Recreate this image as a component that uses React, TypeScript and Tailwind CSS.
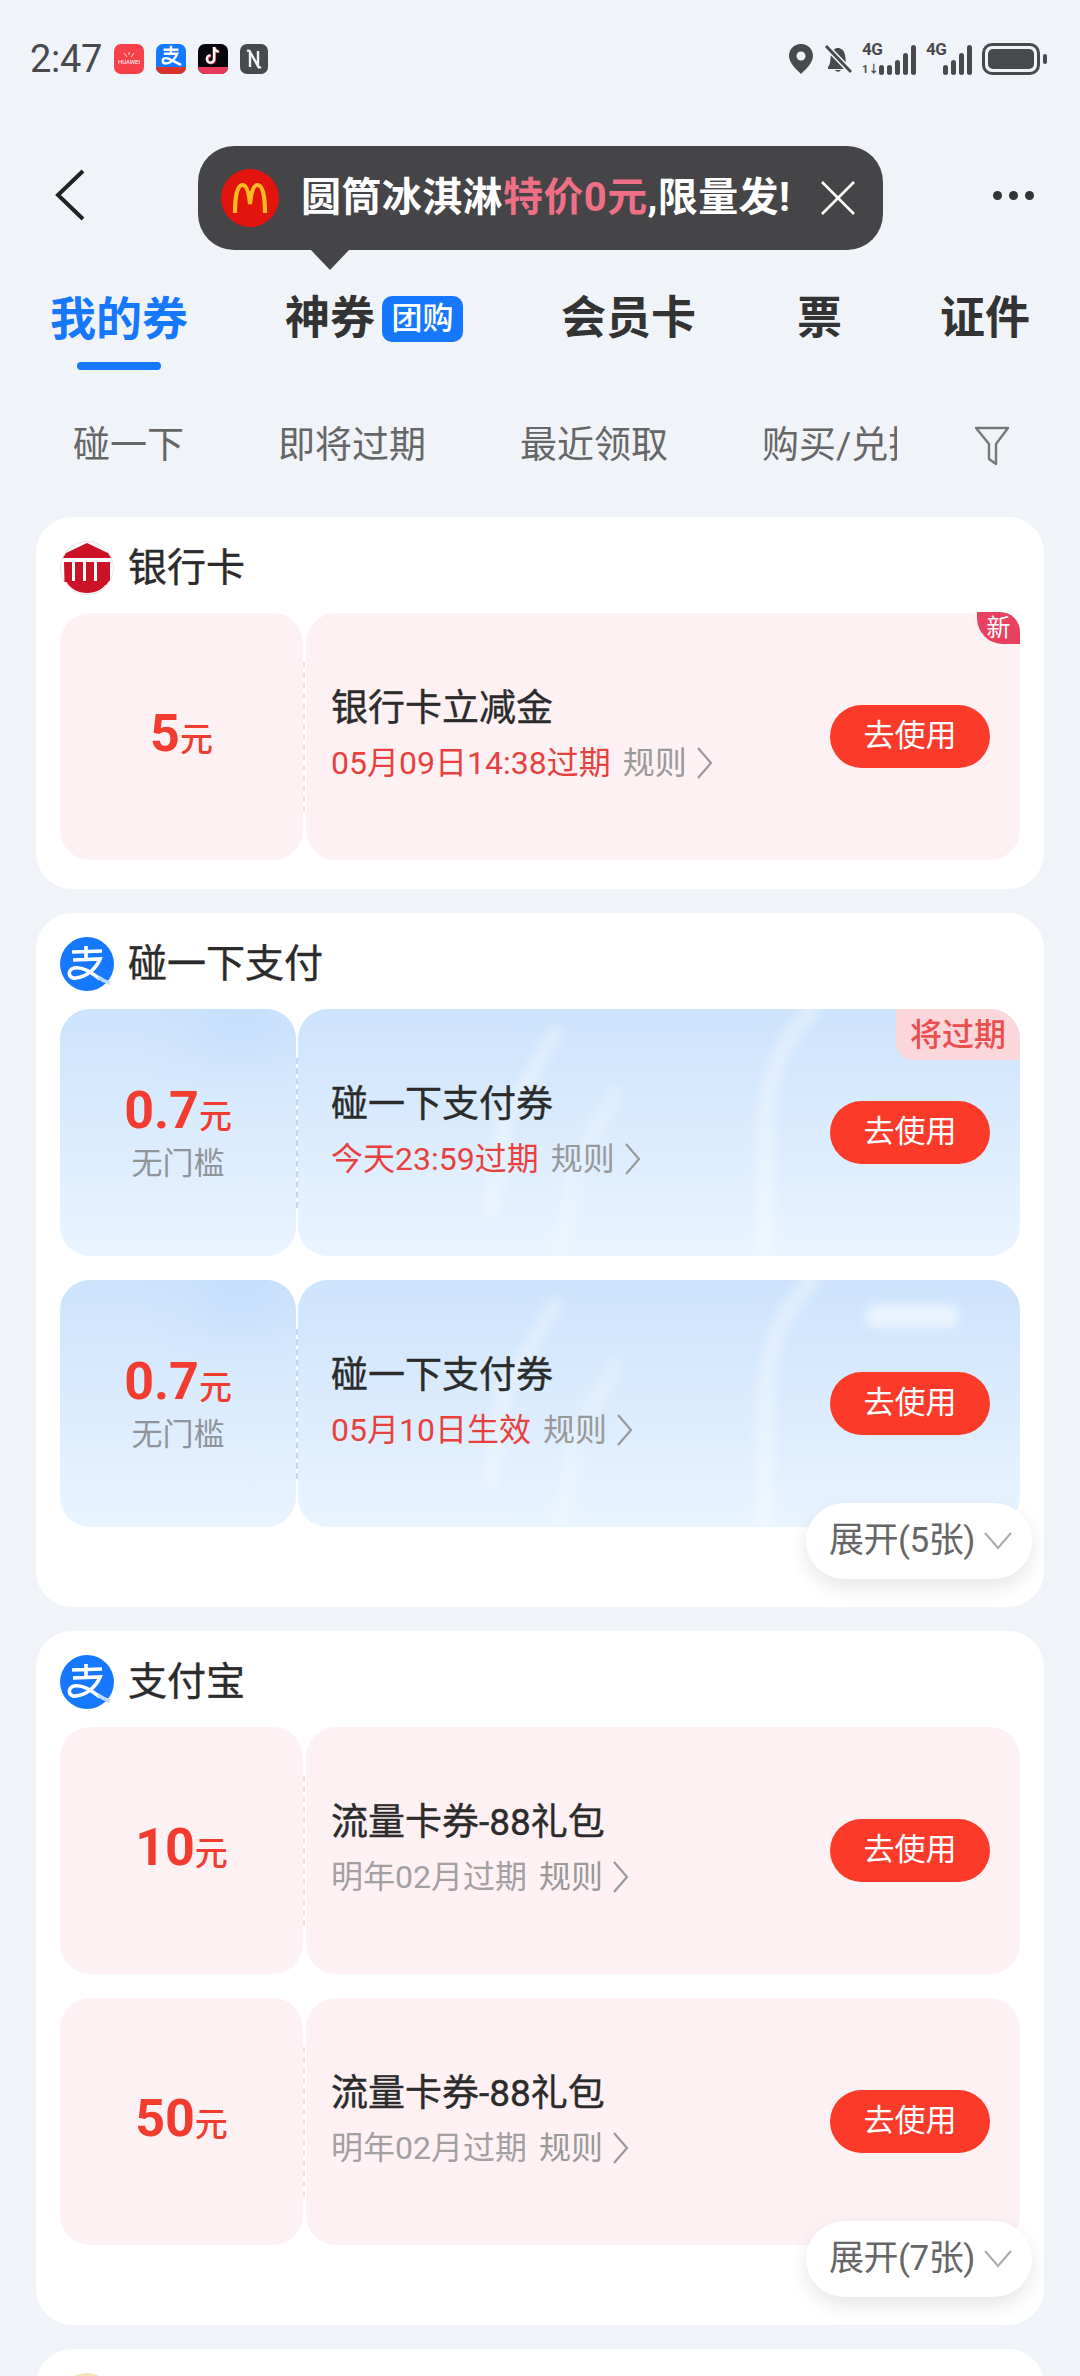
const font = "[font-family:Roboto,'Noto_Sans_CJK_SC',sans-serif]"

function Bars({ lit }: { lit: number[] }) {
  return (
    <div className="flex items-end gap-[3px]">
      {lit.map((h, i) => (
        <div key={i} className={h > 20 ? "h-[30px] w-[5px] rounded-full bg-[#48494d]" : h > 15 ? "h-[22px] w-[5px] rounded-full bg-[#48494d]" : h > 12 ? "h-[15px] w-[5px] rounded-full bg-[#48494d]" : "h-[10px] w-[5px] rounded-full bg-[#48494d]"} />
      ))}
    </div>
  )
}

function StatusBar() {
  return (
    <div className="flex h-[118px] items-center pl-[30px] pr-[33px] text-[#48494d]">
      <span className="w-[72px] text-[38px] leading-none tracking-[-0.3px]">2:47</span>
      <div className="ml-[12px] flex items-center gap-[12px]">
        <div className="flex h-[30px] w-[30px] flex-col items-center justify-center rounded-[7px] bg-[#f7404a]">
          <svg width="14" height="6" viewBox="0 0 14 6" fill="none" stroke="#ffd6d6" strokeWidth="1">
            <path d="M2 1l3 4M12 1L9 5M7 0v3" />
          </svg>
          <span className="text-[6px] leading-[8px] text-white">HUAWEI</span>
        </div>
        <div className="flex h-[30px] w-[30px] flex-col overflow-hidden rounded-[7px] bg-[#1677ff]">
          <svg className="mx-auto" width="24" height="23" viewBox="0 0 54 52" fill="none" stroke="#fff" strokeWidth="5.5">
            <path d="M10 13h34M27 4v16M11 22h30C36 34 26 44 15 44 6 44 6 32 15 32 25 32 36 42 50 47" />
          </svg>
          <span className="h-[7px] bg-[#d8322a]" />
        </div>
        <div className="flex h-[30px] w-[30px] flex-col overflow-hidden rounded-[7px] bg-[#07060d]">
          <svg className="mx-auto" width="18" height="23" viewBox="0 0 18 23" fill="none">
            <path d="M10 3v12a3.6 3.6 0 1 1-3.6-3.6M10 3c.4 2.6 2.2 4.2 4.6 4.5" stroke="#ff3b5c" strokeWidth="2.6" transform="translate(.8 .5)" />
            <path d="M10 3v12a3.6 3.6 0 1 1-3.6-3.6M10 3c.4 2.6 2.2 4.2 4.6 4.5" stroke="#fff" strokeWidth="2.4" />
          </svg>
          <span className="h-[7px] bg-[#e8395a]" />
        </div>
        <svg width="28" height="30" viewBox="0 0 28 30">
          <rect width="28" height="30" rx="7" fill="#48494d" />
          <path d="M7 7c2-1 3 0 3 2v14M21 23c-2 1-3 0-3-2V7M9 6l10 18" fill="none" stroke="#f0f3f8" strokeWidth="2.4" />
        </svg>
      </div>

      <div className="ml-auto flex items-center">
        <svg width="24" height="30" viewBox="0 0 24 30">
          <path d="M12 0C5 0 0 5 0 12c0 7 8 14 12 18 4-4 12-11 12-18C24 5 19 0 12 0z" fill="#48494d" />
          <circle cx="12" cy="12" r="4.5" fill="#f0f3f8" />
        </svg>
        <svg className="ml-[11px]" width="28" height="30" viewBox="0 0 28 30">
          <path d="M4 23c3-3 2-8 3-12 1-5 4-7 7-7s6 2 7 7c1 4 0 9 3 12v2H4z" fill="#48494d" />
          <path d="M11 26a3.5 3.5 0 0 0 6 0z" fill="#48494d" />
          <path d="M2 2l25 26" stroke="#f0f3f8" strokeWidth="6" />
          <path d="M2 2l25 26" stroke="#48494d" strokeWidth="3" />
        </svg>
        <div className="relative ml-[10px] h-[32px] w-[54px]">
          <span className="absolute left-0 top-[-3px] text-[17px] font-bold leading-[18px] tracking-[-0.5px]">4G</span>
          <span className="absolute bottom-0 left-0 text-[11px] font-bold leading-[10px]">1↓</span>
          <div className="absolute bottom-0 right-0">
            <Bars lit={[8, 10, 14, 18, 30]} />
          </div>
        </div>
        <div className="relative ml-[10px] h-[32px] w-[46px]">
          <span className="absolute left-0 top-[-3px] text-[17px] font-bold leading-[18px] tracking-[-0.5px]">4G</span>
          <div className="absolute bottom-0 right-0">
            <Bars lit={[10, 14, 18, 30]} />
          </div>
        </div>
        <div className="ml-[10px] flex h-[32px] w-[58px] items-center rounded-[10px] border-[3px] border-[#48494d] p-[3px]">
          <div className="h-full w-full rounded-[5px] bg-[#48494d]" />
        </div>
        <div className="ml-[3px] h-[10px] w-[4px] rounded-full bg-[#48494d]" />
      </div>
    </div>
  )
}

function NavBar() {
  return (
    <div className="relative flex h-[154px] items-center justify-between pl-[54px] pr-[46px]">
      <svg width="32" height="52" viewBox="0 0 32 52" fill="none" stroke="#222" strokeWidth="4">
        <path d="M29 2L4 26l25 24" />
      </svg>
      <div className="flex gap-[7px]">
        <span className="h-[9px] w-[9px] rounded-full bg-[#333]" />
        <span className="h-[9px] w-[9px] rounded-full bg-[#333]" />
        <span className="h-[9px] w-[9px] rounded-full bg-[#333]" />
      </div>

      {/* promo tooltip */}
      <div className="absolute left-[198px] top-[28px] flex h-[104px] w-[685px] items-center rounded-[36px] bg-[#454547] pl-[23px]">
        <div className="flex h-[58px] w-[58px] items-center justify-center rounded-full bg-[#e3140e]">
          <svg width="36" height="32" viewBox="0 0 36 32" fill="none" stroke="#fdbb1e" strokeWidth="4.2">
            <path d="M3 31C3 15 5 3 10.5 3 15 3 17 12 18 22 19 12 21 3 25.5 3 31 3 33 15 33 31" />
          </svg>
        </div>
        <div className="ml-[22px] whitespace-nowrap text-[40px] font-bold leading-none tracking-[0.4px] text-white">
          圆筒冰淇淋<span className="text-[#ef6f86]">特价0元</span>,限量发!
        </div>
        <svg className="ml-[30px]" width="36" height="36" viewBox="0 0 36 36" stroke="#fff" strokeWidth="2.6">
          <path d="M2 2l32 32M34 2L2 34" />
        </svg>
        <div className="absolute left-[112px] top-[103px] h-0 w-0 border-x-[20px] border-t-[21px] border-x-transparent border-t-[#454547]" />
      </div>
    </div>
  )
}

function Tabs() {
  return (
    <div className="flex h-[98px] pl-[50px] pt-[20px] text-[45px] font-bold leading-[54px] text-[#333]">
      <div className="flex flex-col items-center text-[#1677ff]">
        <span className="text-[46px]">我的券</span>
        <span className="mt-[16px] h-[8px] w-[84px] rounded-full bg-[#1677ff]" />
      </div>
      <div className="ml-[97px] flex h-[54px] items-center">
        <span>神券</span>
        <span className="ml-[7px] flex h-[46px] w-[81px] items-center justify-center rounded-[10px] bg-[#1677ff] text-[31px] font-medium text-white">团购</span>
      </div>
      <span className="ml-[98px]">会员卡</span>
      <span className="ml-[101px]">票</span>
      <span className="ml-[98px]">证件</span>
    </div>
  )
}

function Filters() {
  return (
    <div className="flex h-[147px] items-center pl-[73px] pr-[70px] pt-[4px] text-[37px] text-[#666]">
      <div className="flex w-[824px] gap-[94px] overflow-hidden whitespace-nowrap">
        <span>碰一下</span>
        <span>即将过期</span>
        <span>最近领取</span>
        <span>购买/兑换</span>
      </div>
      <svg className="ml-auto" width="36" height="40" viewBox="0 0 36 40" fill="none" stroke="#777" strokeWidth="2.4">
        <path d="M2 2h32L22 18v20l-7-5V18z" strokeLinejoin="round" />
      </svg>
    </div>
  )
}

function Streaks({ spot }: { spot?: boolean }) {
  return (
    <svg className="absolute inset-0 h-full w-full rounded-[30px]" viewBox="0 0 723 247" preserveAspectRatio="none" fill="none" stroke="#fff">
      <defs>
        <filter id="soft" x="-30%" y="-30%" width="160%" height="160%">
          <feGaussianBlur stdDeviation="5" />
        </filter>
      </defs>
      <g filter="url(#soft)">
        <path d="M257 26L207 110 194 200" strokeWidth="16" strokeOpacity="0.3" strokeLinecap="round" />
        <path d="M317 85L277 160 264 240" strokeWidth="18" strokeOpacity="0.2" strokeLinecap="round" />
        <path d="M520 -6C486 30 470 60 468 120V247" strokeWidth="18" strokeOpacity="0.32" />
        {spot && <rect x="568" y="24" width="94" height="24" rx="12" fill="#fff" fillOpacity="0.55" stroke="none" />}
      </g>
    </svg>
  )
}

type CouponProps = {
  amount: string
  sub?: string
  title: string
  date: string
  dateRed?: boolean
  blue?: boolean
  badge?: "new" | "expiring"
}

function Coupon({ amount, sub, title, date, dateRed, blue, badge }: CouponProps) {
  const surface = blue ? "bg-gradient-to-b from-[#cde3fc] to-[#e9f4ff]" : "bg-[#fef1f4]"
  return (
    <div className="flex h-[247px]">
      <div className={`relative flex shrink-0 flex-col items-center justify-center overflow-hidden rounded-[30px] ${surface} ${blue ? "w-[236px] pt-[3px]" : "w-[243px] pb-[6px]"}`}>
        {blue && <div className="absolute right-[10px] top-[-30px] h-[70px] w-[90px] rounded-full bg-[#c4defc] blur-xl" />}
        <div className="relative flex items-baseline font-medium leading-none text-[#f23c30]">
          <span className="text-[52px] font-bold">{amount}</span>
          <span className="text-[33px]">元</span>
        </div>
        {sub && <span className="relative mt-[7px] text-[31px] leading-[40px] text-[#8f9499]">{sub}</span>}
      </div>
      <div className={`h-[150px] self-center border-l-2 border-dashed ${blue ? "border-[#c3d6ec]" : "ml-[0px] mr-[1px] border-[#f5dde1]"}`} />
      <div className={`relative flex flex-1 items-center rounded-[30px] ${surface} ${blue ? "pl-[33px]" : "pl-[25px]"} pr-[30px]`}>
        {blue && <Streaks spot={!badge} />}
        <div className="relative flex flex-col pb-[4px]">
          <span className="text-[37px] leading-[48px] text-[#2b2b2b] [-webkit-text-stroke:0.4px_#2b2b2b]">{title}</span>
          <div className="mt-[9px] flex items-center text-[32px] leading-[42px]">
            <span className={dateRed ? "text-[#e8413d]" : "text-[#a3a0a2]"}>{date}</span>
            <span className="ml-[12px] text-[#999]">规则</span>
            <svg className="ml-[9px]" width="18" height="34" viewBox="0 0 18 34" fill="none" stroke="#999" strokeWidth="2.2">
              <path d="M2 2l13 15L2 32" />
            </svg>
          </div>
        </div>
        <button className="relative ml-auto h-[63px] w-[160px] rounded-full bg-[#fb3a2a] text-[31px] text-white">去使用</button>
        {badge === "new" && (
          <span className="absolute right-0 top-[-1px] flex h-[32px] w-[43px] items-center justify-center rounded-bl-[26px] rounded-tr-[20px] bg-[#e8415f] text-[24px] leading-none text-white">新</span>
        )}
        {badge === "expiring" && (
          <span className="absolute right-0 top-0 flex h-[51px] w-[124px] items-center justify-center rounded-bl-[18px] rounded-tr-[30px] bg-[#fbd7dc] text-[32px] font-medium leading-none text-[#e9504f]">将过期</span>
        )}
      </div>
    </div>
  )
}

function AlipayIcon() {
  return (
    <svg width="54" height="54" viewBox="0 0 54 54" fill="none" strokeWidth="3.6">
      <circle cx="27" cy="27" r="27" fill="#1677ff" />
      <path d="M12 15l30-1M26 9v13M13 23l27-1C36 32 26 40 16 41 8 42 7 33 14 31 24 29 34 38 40 42" stroke="#fff" />
      <path d="M38 40c4 3 8 5 12 6" stroke="#bcdcff" />
    </svg>
  )
}

function BankIcon() {
  return (
    <svg width="54" height="54" viewBox="0 0 54 54">
      <circle cx="27" cy="27" r="26.5" fill="#fff" stroke="#f0dfe0" />
      <path d="M27 2L48 12 51 17H3L6 12z" fill="#cc1226" />
      <path d="M4 21h8v20H4.5zM15 21h8v25h-8zM26 21h8v25h-8zM37 21h13v18l-4 5h-9z" fill="#cc1226" />
      <path d="M6 40h42c-4 8-12 12-21 12S10 48 6 40z" fill="#cc1226" />
    </svg>
  )
}

function Section({ icon, title, more, tight, children }: { icon: React.ReactNode; title?: string; more?: string; tight?: boolean; children?: React.ReactNode }) {
  return (
    <section className={`relative mx-[36px] rounded-[36px] bg-white px-[24px] ${tight ? "pb-[29px]" : "pb-[80px]"}`}>
      <div className="flex h-[96px] items-center gap-[14px] pt-[6px]">
        {icon}
        {title && <h2 className="text-[39px] leading-none text-[#2b2b2b] [-webkit-text-stroke:0.4px_#2b2b2b]">{title}</h2>}
      </div>
      <div className="flex flex-col gap-[24px]">{children}</div>
      {more && (
        <div className="absolute bottom-[28px] right-[12px] flex h-[76px] w-[226px] items-center rounded-full bg-white pl-[23px] text-[35px] tracking-[-0.5px] text-[#666] shadow-[0_8px_20px_rgba(0,0,0,0.1)]">
          <span className="whitespace-nowrap">{more}</span>
          <svg className="ml-[8px]" width="30" height="20" viewBox="0 0 30 20" fill="none" stroke="#aaa" strokeWidth="2">
            <path d="M2 2l13 15L28 2" />
          </svg>
        </div>
      )}
    </section>
  )
}

export default function App() {
  return (
    <div className={`h-[2376px] w-[1080px] overflow-hidden bg-[#f0f3f8] ${font}`}>
      <StatusBar />
      <NavBar />
      <Tabs />
      <Filters />

      <div className="flex flex-col gap-[24px]">
        <Section icon={<BankIcon />} title="银行卡" tight>
          <Coupon amount="5" title="银行卡立减金" date="05月09日14:38过期" dateRed badge="new" />
        </Section>

        <Section icon={<AlipayIcon />} title="碰一下支付" more="展开(5张)">
          <Coupon blue amount="0.7" sub="无门槛" title="碰一下支付券" date="今天23:59过期" dateRed badge="expiring" />
          <Coupon blue amount="0.7" sub="无门槛" title="碰一下支付券" date="05月10日生效" dateRed />
        </Section>

        <Section icon={<AlipayIcon />} title="支付宝" more="展开(7张)">
          <Coupon amount="10" title="流量卡券-88礼包" date="明年02月过期" />
          <Coupon amount="50" title="流量卡券-88礼包" date="明年02月过期" />
        </Section>

        <Section icon={<div className="h-[54px] w-[54px] rounded-full bg-[#f3e3b5]" />} />
      </div>
    </div>
  )
}
